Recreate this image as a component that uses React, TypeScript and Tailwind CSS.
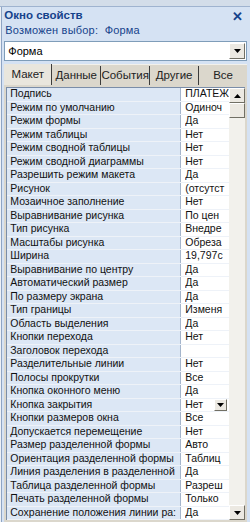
import React from 'react';

const rows: [string, string][] = [
  ['Подпись', 'ПЛАТЕЖ'],
  ['Режим по умолчанию', 'Одиноч'],
  ['Режим формы', 'Да'],
  ['Режим таблицы', 'Нет'],
  ['Режим сводной таблицы', 'Нет'],
  ['Режим сводной диаграммы', 'Нет'],
  ['Разрешить режим макета', 'Да'],
  ['Рисунок', '(отсутст'],
  ['Мозаичное заполнение', 'Нет'],
  ['Выравнивание рисунка', 'По цен'],
  ['Тип рисунка', 'Внедре'],
  ['Масштабы рисунка', 'Обреза'],
  ['Ширина', '19,797с'],
  ['Выравнивание по центру', 'Да'],
  ['Автоматический размер', 'Да'],
  ['По размеру экрана', 'Да'],
  ['Тип границы', 'Изменя'],
  ['Область выделения', 'Да'],
  ['Кнопки перехода', 'Нет'],
  ['Заголовок перехода', ''],
  ['Разделительные линии', 'Нет'],
  ['Полосы прокрутки', 'Все'],
  ['Кнопка оконного меню', 'Да'],
  ['Кнопка закрытия', 'Нет'],
  ['Кнопки размеров окна', 'Все'],
  ['Допускается перемещение', 'Нет'],
  ['Размер разделенной формы', 'Авто'],
  ['Ориентация разделенной формы', 'Таблиц'],
  ['Линия разделения в разделенной', 'Да'],
  ['Таблица разделенной формы', 'Разреш'],
  ['Печать разделенной формы', 'Только'],
  ['Сохранение положения линии ра:', 'Да'],
];

const tabs = ['Макет', 'Данные', 'События', 'Другие', 'Все'];

function DownArrow() {
  return (
    <svg width="7" height="4" viewBox="0 0 7 4">
      <path d="M0 0h7L3.5 4z" fill="#000" />
    </svg>
  );
}

function UpArrow() {
  return (
    <svg width="7" height="4" viewBox="0 0 7 4">
      <path d="M0 4h7L3.5 0z" fill="#000" />
    </svg>
  );
}

function ScrollButton({ children }: { children: React.ReactNode }) {
  return (
    <div className="h-[15px] w-full flex items-center justify-center bg-[#ece9e2] border border-t-white border-l-white border-r-[#716f64] border-b-[#716f64]">
      {children}
    </div>
  );
}

export default function App() {
  return (
    <div
      className="w-[250px] h-[522px] overflow-hidden bg-[#dfe6ef] flex flex-col text-[11px]"
      style={{ fontFamily: '"Liberation Sans", Arial, sans-serif' }}
    >
      {/* top band of the window behind */}
      <div className="h-[7px] bg-[#d3dde9] border-b border-[#9fb3cf]" />
      <div className="flex flex-1 min-h-0">
        {/* strip of the window on the left */}
        <div className="w-[7px] bg-[#eef1f5] border-r border-[#8ea4c4]" />

        {/* property sheet */}
        <div className="flex-1 flex flex-col bg-[#d5e2f3] pl-[2px] pr-[3px]">
          <div className="h-[16px] flex items-center justify-between pt-[2px]">
            <span className="font-bold text-[#15428b] text-[11.5px]">Окно свойств</span>
            <span className="text-[#15428b] font-bold text-[13px] leading-none mr-[4px]">✕</span>
          </div>
          <div className="h-[14px] flex items-center text-[#15428b] pl-[1px] tracking-[0.2px]">
            Возможен выбор:&nbsp; Форма
          </div>

          {/* selector combo */}
          <div className="mt-[4px] h-[20px] flex bg-white border border-[#7f9db9] items-center">
            <span className="flex-1 pl-[3px] text-black">Форма</span>
            <div className="w-[16px] h-[16px] mr-[1px] flex items-center justify-center bg-[#ece9e2] border border-t-white border-l-white border-r-[#716f64] border-b-[#716f64]">
              <DownArrow />
            </div>
          </div>

          {/* tabs */}
          <div className="mt-[3px] flex h-[21px] bg-[#dbd7cc] items-end border-t border-[#f2f0ea]">
            {tabs.map((t, i) => (
              <div
                key={t}
                className={
                  i === 0
                    ? 'w-[48px] h-[21px] flex items-center justify-center bg-[#e9e6dd] border-r border-[#3c3c3c] text-[#222] text-[11.5px]'
                    : 'flex-1 h-[19px] flex items-center justify-center border-r border-[#3c3c3c] text-[#222] text-[11.5px] last:border-r-0'
                }
              >
                {t}
              </div>
            ))}
          </div>

          {/* property grid */}
          <div className="flex-1 min-h-0 flex bg-[#dbd7cc] px-[2px] pt-[2px] pb-[2px]">
            <div className="flex-1 grid grid-rows-[repeat(32,1fr)] border-l border-t border-[#7a8da8] bg-white text-[10.5px]">
              {rows.map(([label, value], i) => (
                <div key={label} className="flex min-h-0 border-b border-[#eef2f8]">
                  <div className="w-[174px] shrink-0 bg-[#dce7f5] border-r border-[#a4b5cc] pl-[3px] flex items-center whitespace-nowrap overflow-hidden text-[#111]">
                    {label}
                  </div>
                  <div className="flex-1 flex items-center pl-[4px] whitespace-nowrap overflow-hidden text-[#111] bg-white">
                    <span className="flex-1 overflow-hidden">{value}</span>
                    {i === 23 && (
                      <div className="w-[13px] h-[12px] mr-[2px] flex items-center justify-center bg-[#ece9e2] border border-t-white border-l-white border-r-[#716f64] border-b-[#716f64]">
                        <DownArrow />
                      </div>
                    )}
                  </div>
                </div>
              ))}
            </div>

            {/* scrollbar */}
            <div className="w-[16px] flex flex-col bg-[#f2f1ec] border-t border-[#7a8da8]">
              <ScrollButton>
                <UpArrow />
              </ScrollButton>
              <div className="h-[15px] bg-[#ece9e2] border border-t-white border-l-white border-r-[#716f64] border-b-[#716f64]" />
              <div className="flex-1" />
              <ScrollButton>
                <DownArrow />
              </ScrollButton>
            </div>
          </div>
        </div>
      </div>
    </div>
  );
}
